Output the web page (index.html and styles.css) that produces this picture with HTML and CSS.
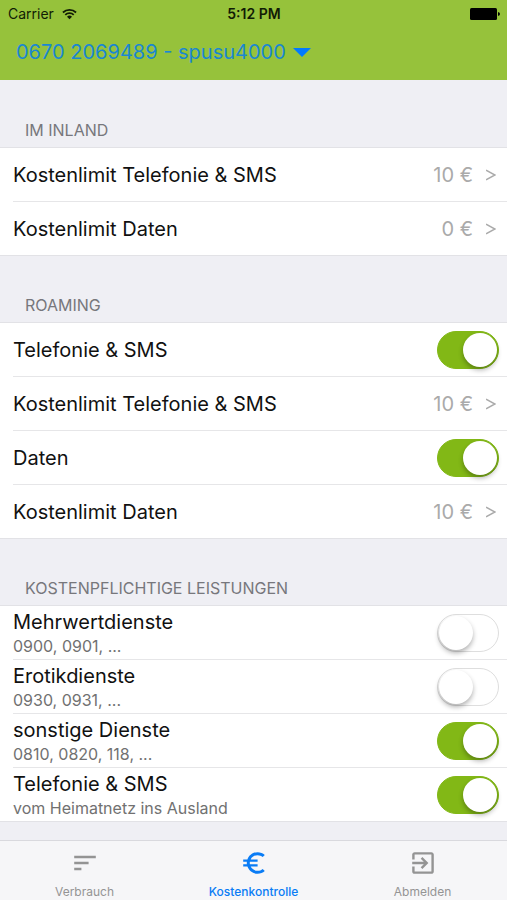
FILE: index.html
```html
<!DOCTYPE html>
<html lang="de">
<head>
<meta charset="utf-8">
<meta name="viewport" content="width=device-width, initial-scale=1">
<title>Kostenkontrolle</title>
<link rel="stylesheet" href="styles.css">
</head>
<body>
<header class="header">
  <div class="status">
    <div class="status-carrier">
      <span>Carrier</span>
      <svg class="wifi" viewBox="0 0 16 12" aria-hidden="true">
        <path d="M1 4.400a10 10 0 0 1 14 0M3.500 7a6.400 6.400 0 0 1 9 0" fill="none" stroke="currentColor" stroke-width="1.900"/>
        <path d="M8 11.600 5.300 8.900a3.800 3.800 0 0 1 5.400 0z" fill="currentColor"/>
      </svg>
    </div>
    <div class="status-time">5:12 PM</div>
    <div class="status-battery">
      <svg class="battery" viewBox="0 0 30 12" aria-hidden="true">
        <rect width="27" height="12" rx="1.500"/>
        <path d="M28 4q2 .5 2 2t-2 2z"/>
      </svg>
    </div>
  </div>
  <div class="account">
    <select class="account-select" aria-label="Rufnummer">
      <option>0670 2069489 - spusu4000</option>
    </select>
    <svg class="caret" viewBox="0 0 18 9" aria-hidden="true"><path d="M0 0h18L9 9z"/></svg>
  </div>
</header>

<main class="content">
  <section>
    <h2 class="heading">IM INLAND</h2>
    <ul class="list">
      <li class="item"><button class="row" type="button"><span>Kostenlimit Telefonie &amp; SMS</span><span class="value">10 €</span><svg class="chevron" viewBox="0 0 10 12" aria-hidden="true"><path d="M0 1.200 9 6 0 10.800"/></svg></button></li>
      <li class="item"><button class="row" type="button"><span>Kostenlimit Daten</span><span class="value">0 €</span><svg class="chevron" viewBox="0 0 10 12" aria-hidden="true"><path d="M0 1.200 9 6 0 10.800"/></svg></button></li>
    </ul>
  </section>

  <section>
    <h2 class="heading">ROAMING</h2>
    <ul class="list">
      <li class="item"><label class="row"><span>Telefonie &amp; SMS</span><input class="switch" type="checkbox" role="switch" checked></label></li>
      <li class="item"><button class="row" type="button"><span>Kostenlimit Telefonie &amp; SMS</span><span class="value">10 €</span><svg class="chevron" viewBox="0 0 10 12" aria-hidden="true"><path d="M0 1.200 9 6 0 10.800"/></svg></button></li>
      <li class="item"><label class="row"><span>Daten</span><input class="switch" type="checkbox" role="switch" checked></label></li>
      <li class="item"><button class="row" type="button"><span>Kostenlimit Daten</span><span class="value">10 €</span><svg class="chevron" viewBox="0 0 10 12" aria-hidden="true"><path d="M0 1.200 9 6 0 10.800"/></svg></button></li>
    </ul>
  </section>

  <section>
    <h2 class="heading">KOSTENPFLICHTIGE LEISTUNGEN</h2>
    <ul class="list">
      <li class="item"><label class="row"><span class="text"><span>Mehrwertdienste</span><span class="detail">0900, 0901, ...</span></span><input class="switch" type="checkbox" role="switch"></label></li>
      <li class="item"><label class="row"><span class="text"><span>Erotikdienste</span><span class="detail">0930, 0931, ...</span></span><input class="switch" type="checkbox" role="switch"></label></li>
      <li class="item"><label class="row"><span class="text"><span>sonstige Dienste</span><span class="detail">0810, 0820, 118, ...</span></span><input class="switch" type="checkbox" role="switch" checked></label></li>
      <li class="item"><label class="row"><span class="text"><span>Telefonie &amp; SMS</span><span class="detail">vom Heimatnetz ins Ausland</span></span><input class="switch" type="checkbox" role="switch" checked></label></li>
    </ul>
  </section>
</main>

<nav class="tabs">
  <a class="tab" href="#verbrauch">
    <svg class="tab-icon" viewBox="2 2 20 20" aria-hidden="true"><path d="M3 18h6v-2H3v2zM3 6v2h18V6H3zm0 7h12v-2H3v2z"/></svg>
    <span>Verbrauch</span>
  </a>
  <a class="tab tab-active" href="#kostenkontrolle" aria-current="page">
    <svg class="tab-icon" viewBox="2 2 20 20" aria-hidden="true"><path d="M15 18.500c-2.510 0-4.680-1.420-5.760-3.500H15v-2H8.580c-.05-.33-.08-.66-.08-1s.03-.67.08-1H15V9H9.240C10.320 6.920 12.500 5.500 15 5.500c1.610 0 3.090.59 4.230 1.570L21 5.300C19.410 3.870 17.300 3 15 3c-3.920 0-7.240 2.510-8.480 6H3v2h3.060c-.04.33-.06.66-.06 1s.02.67.06 1H3v2h3.520c1.240 3.490 4.560 6 8.480 6 2.310 0 4.410-.87 6-2.300l-1.780-1.770c-1.130.98-2.600 1.570-4.220 1.570z"/></svg>
    <span>Kostenkontrolle</span>
  </a>
  <a class="tab" href="#abmelden">
    <svg class="tab-icon" viewBox="2 2 20 20" aria-hidden="true"><path d="M10.090 15.590 11.500 17l5-5-5-5-1.410 1.410L12.670 11H3v2h9.670l-2.580 2.590zM19 3H5c-1.110 0-2 .9-2 2v4h2V5h14v14H5v-4H3v4c0 1.100.89 2 2 2h14c1.100 0 2-.9 2-2V5c0-1.100-.9-2-2-2z"/></svg>
    <span>Abmelden</span>
  </a>
</nav>
</body>
</html>
```
FILE: styles.css
```css
* {
  box-sizing: border-box;
}

body {
  display: flex;
  flex-direction: column;
  min-height: 100vh;
  margin: 0;
  background: #efeff4;
  color: #111;
  font-family: Inter, "Liberation Sans", sans-serif;
  font-size: 20px;
  line-height: 24px;
}

.header {
  height: 80px;
  background: #96c23b;
}

.status {
  display: grid;
  grid-template-columns: 1fr auto 1fr;
  align-items: center;
  height: 27px;
  padding: 0 7px 0 8px;
  color: #111c05;
  font-size: 14px;
}

.status-carrier {
  display: flex;
  align-items: center;
  gap: 8px;
}

.wifi {
  width: 15px;
  height: 12px;
}

.status-time {
  font-weight: 600;
}

.status-battery {
  display: flex;
  justify-content: flex-end;
}

.battery {
  width: 30px;
  height: 12px;
  fill: #000;
}

.account {
  display: flex;
  align-items: center;
  gap: 7px;
  height: 50px;
  padding: 0 16px;
}

.account-select {
  appearance: none;
  padding: 0;
  border: 0;
  background: none;
  color: #1a87d2;
  font: inherit;
}

.caret {
  width: 18px;
  height: 9px;
  fill: #007aff;
}

.content {
  flex: 1;
}

.heading {
  height: 68px;
  margin: 0;
  padding: 38px 25px 0;
  color: #77777c;
  font-size: 16px;
  font-weight: 400;
}

.list {
  margin: 0;
  padding: 0;
  background: #fff;
  box-shadow: 0 0 0 1px #e2e2e6;
  list-style: none;
}

.item {
  padding-left: 13px;
}

.row {
  display: flex;
  align-items: center;
  justify-content: space-between;
  width: 100%;
  height: 53px;
  padding: 0 8px 0 0;
  border: 0;
  background: none;
  color: inherit;
  font: inherit;
  text-align: left;
}

.item + .item .row {
  height: 54px;
  border-top: 1px solid #e6e6e8;
}

.value {
  margin-left: auto;
  color: #aaa;
}

.chevron {
  width: 10px;
  height: 12px;
  margin: 0 3px 0 13px;
  fill: none;
  stroke: #aaa;
  stroke-width: 1.5;
}

.text {
  display: flex;
  flex-direction: column;
  padding-top: 2px;
}

.detail {
  color: #717171;
  font-size: 16px;
}

.switch {
  appearance: none;
  flex: none;
  width: 62px;
  height: 38px;
  margin: 0;
  padding: 1px;
  border: 1px solid #dedede;
  border-radius: 19px;
  background: #fff;
}

.switch::before {
  display: block;
  width: 34px;
  height: 34px;
  border-radius: 50%;
  background: #fff;
  box-shadow: 0 3px 5px rgba(0, 0, 0, 0.3);
  content: "";
}

.switch:checked {
  border-color: #82b816;
  background: #82b816;
}

.switch:checked::before {
  margin-left: auto;
}

.tabs {
  position: sticky;
  bottom: 0;
  display: flex;
  height: 60px;
  border-top: 1px solid #d9d9de;
  background: #f6f6f8;
}

.tab {
  display: flex;
  flex: 1;
  flex-direction: column;
  align-items: center;
  gap: 9px;
  padding-top: 10px;
  color: #949494;
  font-size: 12px;
  line-height: 16px;
  text-decoration: none;
}

.tab-active {
  color: #0a7cf5;
  font-weight: 500;
}

.tab-icon {
  width: 24px;
  height: 24px;
  fill: currentColor;
}
```
